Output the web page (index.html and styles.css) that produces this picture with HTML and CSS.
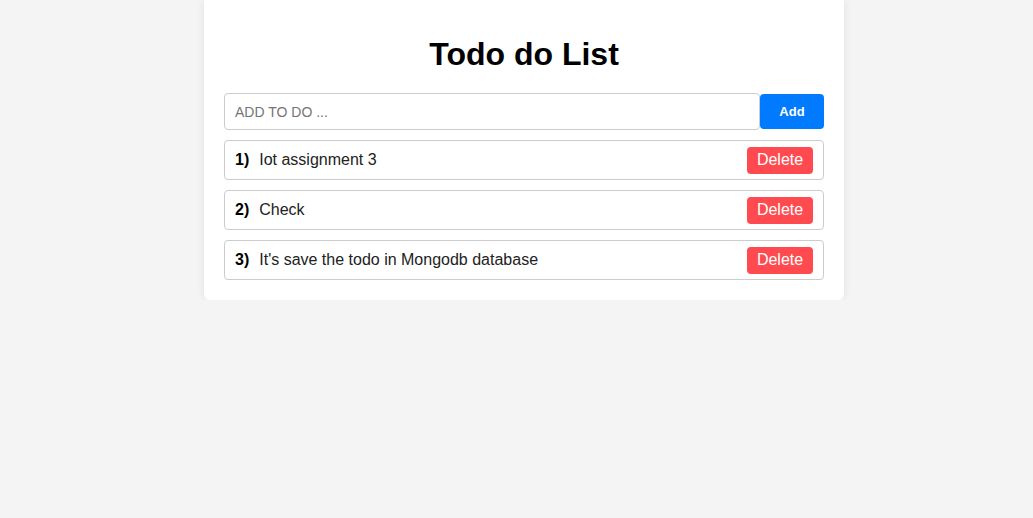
FILE: index.html
```html
<!DOCTYPE html>
<html>
<head>
<meta charset="utf-8">
<link rel="stylesheet" href="styles.css">
</head>
<body>
<div class="card">
  <h1 class="title">Todo do List</h1>
  <div class="add-row">
    <input class="add-input" type="text" placeholder="ADD TO DO ...">
    <button class="add-btn">Add</button>
  </div>
  <ul class="list">
    <li class="item"><span class="num">1)</span><span class="text">Iot assignment 3</span><button class="del-btn">Delete</button></li>
    <li class="item"><span class="num">2)</span><span class="text">Check</span><button class="del-btn">Delete</button></li>
    <li class="item"><span class="num">3)</span><span class="text">It's save the todo in Mongodb database</span><button class="del-btn">Delete</button></li>
  </ul>
</div>
</body>
</html>
```
FILE: styles.css
```css
html, body {
  margin: 0;
  padding: 0;
  background: #f4f4f4;
  font-family: "Liberation Sans", Arial, sans-serif;
}
.card {
  width: 600px;
  margin-left: 204px;
  background: #fff;
  padding: 17px 20px 20px;
  border-radius: 0 0 6px 6px;
  box-shadow: 0 0 8px rgba(0,0,0,0.08);
}
.title {
  margin: 19px 0 20px;
  font-size: 32px;
  line-height: 37px;
  text-align: center;
  color: #000;
}
.add-row {
  display: flex;
  align-items: center;
  margin-bottom: 10px;
}
.add-input {
  flex: 1;
  height: 37px;
  box-sizing: border-box;
  border: 1px solid #ccc;
  border-radius: 4px;
  padding: 0 10px;
  font-family: "Liberation Sans", Arial, sans-serif;
  font-size: 14px;
  color: #333;
  outline: none;
}
.add-input::placeholder {
  color: #757575;
}
.add-btn {
  width: 64px;
  height: 35px;
  border: none;
  border-radius: 4px;
  background: #007bff;
  color: #fff;
  font-family: "Liberation Sans", Arial, sans-serif;
  font-weight: bold;
  font-size: 13px;
  padding: 0;
}
.list {
  list-style: none;
  margin: 0;
  padding: 0;
  display: flex;
  flex-direction: column;
  gap: 10px;
}
.item {
  display: flex;
  align-items: center;
  height: 40px;
  box-sizing: border-box;
  border: 1px solid #ccc;
  border-radius: 4px;
  padding: 0 10px;
  font-size: 16px;
  color: #222;
}
.num {
  font-weight: bold;
  color: #000;
  margin-right: 10px;
}
.text {
  flex: 1;
}
.del-btn {
  width: 66px;
  height: 27px;
  border: none;
  border-radius: 4px;
  background: #ff4a4f;
  color: #fff;
  font-family: "Liberation Sans", Arial, sans-serif;
  font-size: 16px;
  padding: 0;
}
```
